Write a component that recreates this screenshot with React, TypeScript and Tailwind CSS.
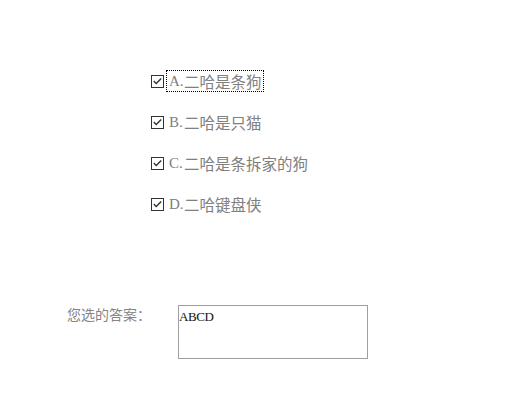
import React from "react";

const options = [
  { key: "A.", text: "二哈是条狗", focused: true },
  { key: "B.", text: "二哈是只猫", focused: false },
  { key: "C.", text: "二哈是条拆家的狗", focused: false },
  { key: "D.", text: "二哈键盘侠", focused: false },
];

function Box() {
  return (
    <span className="inline-flex w-[13px] h-[13px] border border-[#333] bg-white shrink-0">
      <svg width="11" height="11" viewBox="0 0 11 11">
        <path d="M1.8 5 L4.2 7.6 L9.2 2.4" fill="none" stroke="#333" strokeWidth="1.4" />
      </svg>
    </span>
  );
}

export default function App() {
  return (
    <div className="w-[512px] h-[398px] bg-white relative" style={{ fontFamily: '"Noto Sans CJK SC", sans-serif' }}>
      <div className="pt-[70px] pl-[151px] flex flex-col gap-[19px]">
        {options.map((o) => (
          <div key={o.key} className="flex items-center h-[22px]">
            <Box />
            <span
              className={
                "ml-[2px] h-[22px] flex items-center pl-[2px] pr-[1px] text-[15.5px] leading-[16px] text-[#808080] border border-dotted " +
                (o.focused ? "border-black" : "border-transparent")
              }
            >
              <span className="inline-block w-[15px] text-[15px]" style={{ fontFamily: '"Liberation Serif", serif' }}>
                {o.key}
              </span>
              <span>{o.text}</span>
            </span>
          </div>
        ))}
      </div>
      <div className="mt-[90px] pl-[67px] flex items-start">
        <div className="w-[111px] text-[14px] leading-[16px] pt-[1px] text-[#858585]">您选的答案：</div>
        <textarea
          readOnly
          value="ABCD"
          className="w-[190px] h-[54px] border border-[#a0a0a0] resize-none outline-none pl-[0px] pr-[2px] pt-[3px] text-[13px] leading-[16px] tracking-[-0.4px] text-[#111]"
          style={{ fontFamily: '"Liberation Serif", serif' }}
        />
      </div>
    </div>
  );
}
